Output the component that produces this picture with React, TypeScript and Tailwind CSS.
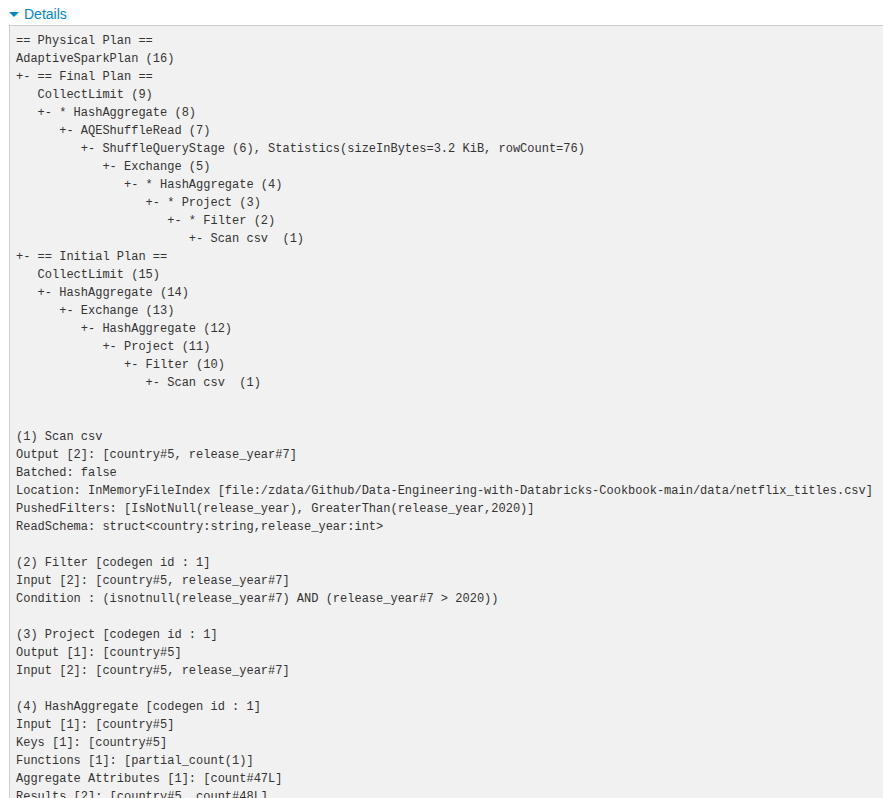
const planText = `== Physical Plan ==
AdaptiveSparkPlan (16)
+- == Final Plan ==
   CollectLimit (9)
   +- * HashAggregate (8)
      +- AQEShuffleRead (7)
         +- ShuffleQueryStage (6), Statistics(sizeInBytes=3.2 KiB, rowCount=76)
            +- Exchange (5)
               +- * HashAggregate (4)
                  +- * Project (3)
                     +- * Filter (2)
                        +- Scan csv  (1)
+- == Initial Plan ==
   CollectLimit (15)
   +- HashAggregate (14)
      +- Exchange (13)
         +- HashAggregate (12)
            +- Project (11)
               +- Filter (10)
                  +- Scan csv  (1)


(1) Scan csv
Output [2]: [country#5, release_year#7]
Batched: false
Location: InMemoryFileIndex [file:/zdata/Github/Data-Engineering-with-Databricks-Cookbook-main/data/netflix_titles.csv]
PushedFilters: [IsNotNull(release_year), GreaterThan(release_year,2020)]
ReadSchema: struct<country:string,release_year:int>

(2) Filter [codegen id : 1]
Input [2]: [country#5, release_year#7]
Condition : (isnotnull(release_year#7) AND (release_year#7 > 2020))

(3) Project [codegen id : 1]
Output [1]: [country#5]
Input [2]: [country#5, release_year#7]

(4) HashAggregate [codegen id : 1]
Input [1]: [country#5]
Keys [1]: [country#5]
Functions [1]: [partial_count(1)]
Aggregate Attributes [1]: [count#47L]
Results [2]: [country#5, count#48L]

(5) Exchange
Input [2]: [country#5, count#48L]
Arguments: hashpartitioning(country#5, 200), ENSURE_REQUIREMENTS, [plan_id=61]`;

const App: React.FC = () => {
  return (
    <div className="w-[883px] h-[798px] overflow-hidden bg-white font-['Liberation_Sans',Arial,sans-serif]">
      <div className="flex items-center h-[25px] pl-[9px] pt-[3px]">
        <span className="w-0 h-0 border-l-[5px] border-r-[5px] border-t-[5px] border-l-transparent border-r-transparent border-t-[#0088cc] mr-[5px] mt-[1px]" />
        <a className="text-[14px] leading-[20px] text-[#0088cc] cursor-pointer">Details</a>
      </div>
      <pre className="ml-[9px] w-[920px] bg-[#f1f1f1] border border-[#cccccc] pl-[6px] pt-[6px] pb-[9px] text-[12px] leading-[18px] text-[#333333] font-['Liberation_Mono','Courier_New',monospace] whitespace-pre">
        {planText}
      </pre>
    </div>
  );
};

export default App;
